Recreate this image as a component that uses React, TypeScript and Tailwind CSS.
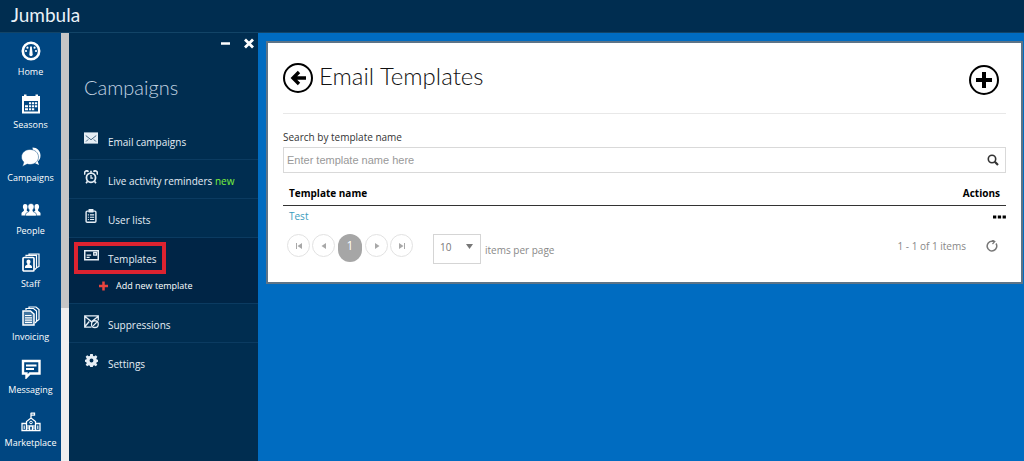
import { useState } from 'react';
import type { ReactNode } from 'react';

interface IconProps {
  children: ReactNode;
  size?: number;
}

const Icon = ({ children, size = 20 }: IconProps) => (
  <svg width={size} height={size} viewBox="0 0 20 20" fill="none" stroke="currentColor" strokeWidth="1.5" aria-hidden="true" className="shrink-0">
    {children}
  </svg>
);

const railItems: { label: string; icon: ReactNode }[] = [
  {
    label: 'Home',
    icon: (
      <>
        <circle cx="10" cy="10" r="8.2" strokeWidth="2.6" />
        <path d="M9.2 5.5h1.6l.9 8a1.7 1.7 0 1 1-3.4 0z" fill="currentColor" stroke="none" />
        <g fill="currentColor" stroke="none">
          <circle cx="5" cy="10" r="1.1" />
          <circle cx="6.4" cy="6.7" r="1.1" />
          <circle cx="13.6" cy="6.7" r="1.1" />
          <circle cx="15" cy="10" r="1.1" />
        </g>
      </>
    ),
  },
  {
    label: 'Seasons',
    icon: (
      <>
        <path d="M1 2h2V.5h2.500V2h9V.5H17V2h2v17.500H1z" fill="currentColor" stroke="none" />
        <path d="M3 7h14v10.500H3z" fill="#004681" stroke="none" />
        <path d="M8 8.300h2.200v2H8zM11 8.300h2.200v2H11zM14 8.300h2.200v2H14zM4 11.300h3v2H4zM8 11.300h2.200v2H8zM11 11.300h2.200v2H11zM14 11.300h2.200v2H14zM4 14.300h3v2H4zM8 14.300h2.200v2H8zM11 14.300h2.200v2H11z" fill="currentColor" stroke="none" />
      </>
    ),
  },
  {
    label: 'Campaigns',
    icon: (
      <>
        <path d="M11.500 .5C16 .5 19.500 3.800 19.500 8.500c0 2.800-1 4.600-2.700 6l1.200 3.500-4.500-2z" fill="currentColor" stroke="none" />
        <path d="M9 2.500c4.800 0 8.500 3.200 8.500 7.500s-3.700 7.500-8.500 7.500c-1 0-2-.1-2.800-.4L1.500 19.500l1.300-4.500C1.300 13.800.5 12 .5 10c0-4.300 3.700-7.500 8.500-7.500z" fill="currentColor" stroke="#004681" strokeWidth=".5" />
      </>
    ),
  },
  {
    label: 'People',
    icon: (
      <g fill="currentColor" stroke="none">
        <path d="M4 4c1.700 0 2.700 1.200 2.700 2.800 0 1.300-.6 2-.9 2.700v1.200l2 1.300v3.500H.5v-2.300c0-1 1.800-1.500 2.400-2.400V9.500c-.5-.7-1-1.400-1-2.700C1.900 5.200 2.600 4 4 4z" />
        <path d="M16 4c-1.700 0-2.700 1.200-2.700 2.800 0 1.300.6 2 .9 2.700v1.200l-2 1.300v3.500h7.300v-2.300c0-1-1.800-1.500-2.400-2.400V9.500c.5-.7 1-1.400 1-2.700C18.100 5.200 17.400 4 16 4z" />
        <path d="M10 3.500c1.900 0 3.100 1.300 3.100 3.300 0 1.400-.6 2.300-1.200 3v1.400c.5 1 3.500 1.500 3.500 3V16H4.600v-1.800c0-1.500 3-2 3.500-3V9.800c-.6-.7-1.200-1.600-1.200-3 0-2 1.200-3.300 3.100-3.300z" stroke="#004681" strokeWidth=".6" />
      </g>
    ),
  },
  {
    label: 'Staff',
    icon: (
      <>
        <path d="M5 3.500V2.300h10.500v12.500l-1.700 1.700M8 1.800V1h10v12.500l-2 1" strokeWidth="1.200" />
        <rect x="2" y="4.500" width="11" height="13.500" rx="1" strokeWidth="1.700" />
        <path d="M7.500 6.500c1.300 0 2 1 2 2.200 0 1-.5 1.700-.9 2.100v.8c.6.5 2.400 1 2.400 2.200V15H4v-1.200c0-1.200 1.800-1.700 2.400-2.200v-.8c-.4-.4-.9-1.100-.9-2.100 0-1.200.7-2.200 2-2.200z" fill="currentColor" stroke="none" />
      </>
    ),
  },
  {
    label: 'Invoicing',
    icon: (
      <>
        <path d="M5 4V2.500h7.500L15.500 5v10.500L14 17M8 2V1h7l3 2.500v10l-2 1.500" strokeWidth="1.200" />
        <path d="M2 5h7.500L13 8v11H2z" fill="currentColor" fillOpacity=".25" />
        <path d="M4 9.500h6.500M4 11.800h7M4 14.100h7M4 16.400h7" strokeWidth="1.200" />
      </>
    ),
  },
  {
    label: 'Messaging',
    icon: (
      <>
        <path d="M2 2h16.500v12.500H9L5.500 18v-3.500H2z" strokeWidth="2.400" />
        <path d="M5 6.500h10.500M5 10h8" strokeWidth="1.800" />
      </>
    ),
  },
  {
    label: 'Marketplace',
    icon: (
      <>
        <path d="M10 6V.8M10 1.200h3.500v2H10M5.500 18.500V9.500L10 6l4.500 3.500v9M5.500 11.500H1v7h18v-7h-4.500M8.500 18.500v-4.500h3v4.500" strokeWidth="1.300" />
        <circle cx="10" cy="10.500" r="1.300" strokeWidth="1" />
        <path d="M3.200 13.500v3.500M16.800 13.500v3.500M7 13v4M13 13v4" strokeWidth="1.100" />
      </>
    ),
  },
];

const EnvelopeIcon = () => (
  <Icon size={14}>
    <path d="M0 2h20v16H0z" fill="currentColor" stroke="none" />
    <path d="M2.500 6.500l7.500 6 7.500-6M3 15l3-3M17 15l-3-3" stroke="#002d50" strokeWidth="1" />
  </Icon>
);

const AlarmIcon = () => (
  <Icon size={14}>
    <circle cx="10" cy="11" r="6.500" strokeWidth="2.500" />
    <path d="M10 7v4.500h3" strokeWidth="1.800" />
    <path d="M1.500 6.500a3.200 3.200 0 0 1 5-4M18.500 6.500a3.200 3.200 0 0 0-5-4M5 16l-2 3M15 16l2 3M10 1v3" strokeWidth="2.400" />
  </Icon>
);

const ClipboardIcon = () => (
  <Icon size={14}>
    <rect x="3" y="3" width="14" height="16" rx="1.500" strokeWidth="2" />
    <path d="M6.500 0h7v5h-7z" fill="currentColor" stroke="none" />
    <path d="M5.500 8.500h1.500M8.500 8.500h6M5.500 11.800h1.500M8.500 11.800h6M5.500 15h1.500M8.500 15h6" strokeWidth="1.700" />
  </Icon>
);

const CardIcon = () => (
  <Icon size={15}>
    <path d="M1 3.500h18v12H1z" strokeWidth="2" />
    <path d="M13 6h3.500v3.500H13zM3.500 9.500h6M3.500 12.500h4" strokeWidth="1.800" />
  </Icon>
);

const BlockedMailIcon = () => (
  <Icon size={15}>
    <path d="M10 17.500H1V2.500h18v6M1 3l9 7.500L19 3M1 17l6-7" strokeWidth="1.800" />
    <circle cx="14.500" cy="13.500" r="4.500" strokeWidth="1.700" />
    <path d="M12 16l5-5" strokeWidth="1.500" />
  </Icon>
);

const GearIcon = () => (
  <Icon size={13}>
    <path fill="currentColor" stroke="none" fillRule="evenodd" d="M8 0h4l.5 2.900 1.700.7L16.600 2 19 4.400l-1.600 2.400.7 1.700L20 9v3l-2 .5-.7 1.700 1.700 2.400-2.400 2.400-2.400-1.700-1.700.7L12 20H8l-.5-2.100-1.700-.7L3.400 19 1 16.600l1.700-2.400-.7-1.700L0 12V9l2-.5.7-1.700L1 4.400 3.400 2l2.400 1.600 1.700-.7zM10 7a3 3 0 1 0 0 6 3 3 0 0 0 0-6z" />
  </Icon>
);

const MenuRow = ({ icon, children }: { icon: ReactNode; children: ReactNode }) => (
  <a href="#" className="flex h-[38px] items-center gap-2.5 pl-[15px] text-[10px] text-[#e6eef5]">
    <span className="flex w-3.5 justify-center pb-1">{icon}</span>
    <span className="pt-1">{children}</span>
  </a>
);

const PagerButton = ({ label, children }: { label: string; children: ReactNode }) => (
  <button aria-label={label} className="flex size-[23px] items-center justify-center rounded-full border border-[#e2e2e2] text-[#a8a8a8]">
    <svg width="8" height="8" viewBox="0 0 8 8" fill="currentColor" aria-hidden="true">
      {children}
    </svg>
  </button>
);

const Rail = () => (
  <nav className="w-[61px] shrink-0 bg-[#004681]">
    {railItems.map((item) => (
      <a key={item.label} href="#" className="flex h-[53px] flex-col items-center gap-[3px] pt-2 text-[9px] leading-4 text-white">
        <Icon>{item.icon}</Icon>
        {item.label}
      </a>
    ))}
  </nav>
);

const SidePanel = () => (
  <aside className="w-[189px] shrink-0 bg-[#002d50]">
    <div className="flex justify-end gap-3 pt-1 pr-[3px] text-white">
      <button aria-label="Minimize">
        <svg width="12" height="12" viewBox="0 0 12 12" aria-hidden="true">
          <path d="M2 6.500h9" stroke="currentColor" strokeWidth="2.500" />
        </svg>
      </button>
      <button aria-label="Close">
        <svg width="12" height="12" viewBox="0 0 12 12" aria-hidden="true">
          <path d="M2 2.500l8 8M10 2.500l-8 8" stroke="currentColor" strokeWidth="2.800" />
        </svg>
      </button>
    </div>
    <h2 className="pt-6 pb-5 pl-[15px] font-['Lato'] text-xl leading-7 font-light text-[#c3d3e2]">Campaigns</h2>
    <ul className="divide-y divide-[#0b3b61]">
      <li><MenuRow icon={<EnvelopeIcon />}>Email campaigns</MenuRow></li>
      <li>
        <MenuRow icon={<AlarmIcon />}>
          Live activity reminders <span className="text-[#7af03c]">new</span>
        </MenuRow>
      </li>
      <li><MenuRow icon={<ClipboardIcon />}>User lists</MenuRow></li>
      <li className="relative bg-[#002546]">
        <MenuRow icon={<CardIcon />}>Templates</MenuRow>
        <span className="pointer-events-none absolute top-1 left-[5px] h-8 w-[92px] border-4 border-[#dc2330]" />
        <a href="#" className="flex h-[27px] items-start gap-2 pt-0.5 pl-[30px] text-[9px] leading-4 text-white">
          <svg width="9" height="16" viewBox="0 0 10 16" aria-hidden="true">
            <path d="M5 3v10M0 8h10" stroke="#e8453f" strokeWidth="2.800" />
          </svg>
          Add new template
        </a>
      </li>
      <li><MenuRow icon={<BlockedMailIcon />}>Suppressions</MenuRow></li>
      <li><MenuRow icon={<GearIcon />}>Settings</MenuRow></li>
    </ul>
  </aside>
);

export default function App() {
  const [query, setQuery] = useState('');
  const [pageSize, setPageSize] = useState('10');

  return (
    <div className="flex min-h-screen flex-col bg-[#006cc1] font-['Open_Sans',sans-serif]">
      <header className="flex h-[33px] items-center border-b border-[#124467] bg-[#002d50] pb-0.5 pl-[11px]">
        <h1 className="font-['Lato'] text-[19px] leading-6 text-[#eaf1f7]">Jumbula</h1>
      </header>

      <div className="flex flex-1 items-stretch">
        <Rail />
        <div className="w-2 shrink-0 bg-[#f0f0f0]">
          <div className="h-[275px] bg-[#c6c6c6]" />
        </div>
        <SidePanel />

        <main className="min-w-0 flex-1 pt-2 pr-px pl-2">
          <section className="border-2 border-[#5d7487] bg-white px-[15px] pb-[18px]">
            <div className="flex h-[71px] items-start justify-between border-b border-[#e8e8e8] pt-[19px] pr-[7px]">
              <div className="flex items-center gap-1.5">
                <button aria-label="Back" className="flex size-[30px] items-center justify-center rounded-full border-2 border-black">
                  <svg width="16" height="16" viewBox="0 0 16 16" fill="none" stroke="#000" strokeWidth="3.400" aria-hidden="true">
                    <path d="M9 2L3 8l6 6M3 8h13" />
                  </svg>
                </button>
                <h2 className="pb-1 font-['Lato'] text-2xl leading-7 font-light text-[#111]">Email Templates</h2>
              </div>
              <button aria-label="Add template" className="mt-[3px] flex size-[30px] items-center justify-center rounded-full border-2 border-black">
                <svg width="16" height="16" viewBox="0 0 16 16" stroke="#000" strokeWidth="4" aria-hidden="true">
                  <path d="M8 0v16M0 8h16" />
                </svg>
              </button>
            </div>

            <label htmlFor="template-search" className="block pt-[15px] pb-0.5 text-[10px] leading-4 text-[#333]">
              Search by template name
            </label>
            <div className="flex h-[26px] items-center border border-[#d9d9d9] pr-1.5">
              <input
                id="template-search"
                type="text"
                value={query}
                onChange={(e) => setQuery(e.target.value)}
                placeholder="Enter template name here"
                className="min-w-0 flex-1 px-[3px] font-['Liberation_Sans'] text-[11px] text-[#333] outline-none placeholder:text-[#999]"
              />
              <button aria-label="Search">
                <svg width="12" height="12" viewBox="0 0 12 12" fill="none" stroke="#333" aria-hidden="true">
                  <circle cx="5" cy="5" r="3.700" strokeWidth="1.600" />
                  <path d="M7.800 7.800l3.200 3.200" strokeWidth="2.200" />
                </svg>
              </button>
            </div>

            <table className="mt-2 w-full text-[10px] leading-4">
              <thead>
                <tr className="border-b border-[#333] text-black">
                  <th className="px-1.5 pt-1 pb-1 text-left font-bold">Template name</th>
                  <th className="px-1.5 pt-1 pb-1 text-right font-bold">Actions</th>
                </tr>
              </thead>
              <tbody>
                <tr>
                  <td className="px-1.5 pt-0.5 pb-1"><a href="#" className="text-[#3a9bbd]">Test</a></td>
                  <td className="pt-0.5 pb-1 text-right leading-none">
                    <button aria-label="Row actions" className="align-middle">
                      <svg width="13" height="4" viewBox="0 0 13 4" aria-hidden="true">
                        <path d="M0 .5h3.300v3H0zM4.800 .5h3.300v3H4.800zM9.600 .5h3.300v3H9.600z" />
                      </svg>
                    </button>
                  </td>
                </tr>
              </tbody>
            </table>

            <div className="flex items-start justify-between pt-1 pr-2 pl-1 text-[10px] leading-4 text-[#888]">
              <div className="flex items-start">
                <div className="flex items-start gap-0.5 pt-0.5">
                  <PagerButton label="First page"><path d="M1 1h1v6H1zM7 1v6L2.500 4z" /></PagerButton>
                  <PagerButton label="Previous page"><path d="M6 1v6L1.500 4z" /></PagerButton>
                  <button className="mx-px h-7 w-6 rounded-full bg-[#a6a6a6] pb-1 text-xs text-white">1</button>
                  <PagerButton label="Next page"><path d="M2 1v6l4.500-3z" /></PagerButton>
                  <PagerButton label="Last page"><path d="M6 1h1v6H6zM1 1v6l4.500-3z" /></PagerButton>
                </div>
                <div className="relative ml-5 pt-0.5">
                  <select
                    id="page-size"
                    value={pageSize}
                    onChange={(e) => setPageSize(e.target.value)}
                    className="block h-[30px] w-12 appearance-none border border-[#d5d5d5] bg-white pb-1 pl-1.5 text-[10px] text-[#777]"
                  >
                    <option>10</option>
                    <option>20</option>
                    <option>50</option>
                  </select>
                  <svg width="7" height="5" viewBox="0 0 7 5" className="pointer-events-none absolute top-3 right-2" aria-hidden="true">
                    <path d="M0 0h7L3.500 5z" fill="#777" />
                  </svg>
                </div>
                <label htmlFor="page-size" className="pt-2.5 pl-1">items per page</label>
              </div>
              <div className="flex items-center gap-5 pt-1.5">
                <span>1 - 1 of 1 items</span>
                <button aria-label="Refresh">
                  <svg width="12" height="12" viewBox="0 0 12 12" fill="none" stroke="#777" strokeWidth="1.500" aria-hidden="true">
                    <path d="M10 3.500a4.800 4.800 0 1 1-4-2.200h2" />
                    <path d="M6 0l2.800 1.500L6.500 4" strokeWidth="1.200" />
                  </svg>
                </button>
              </div>
            </div>
          </section>
        </main>
      </div>
    </div>
  );
}
